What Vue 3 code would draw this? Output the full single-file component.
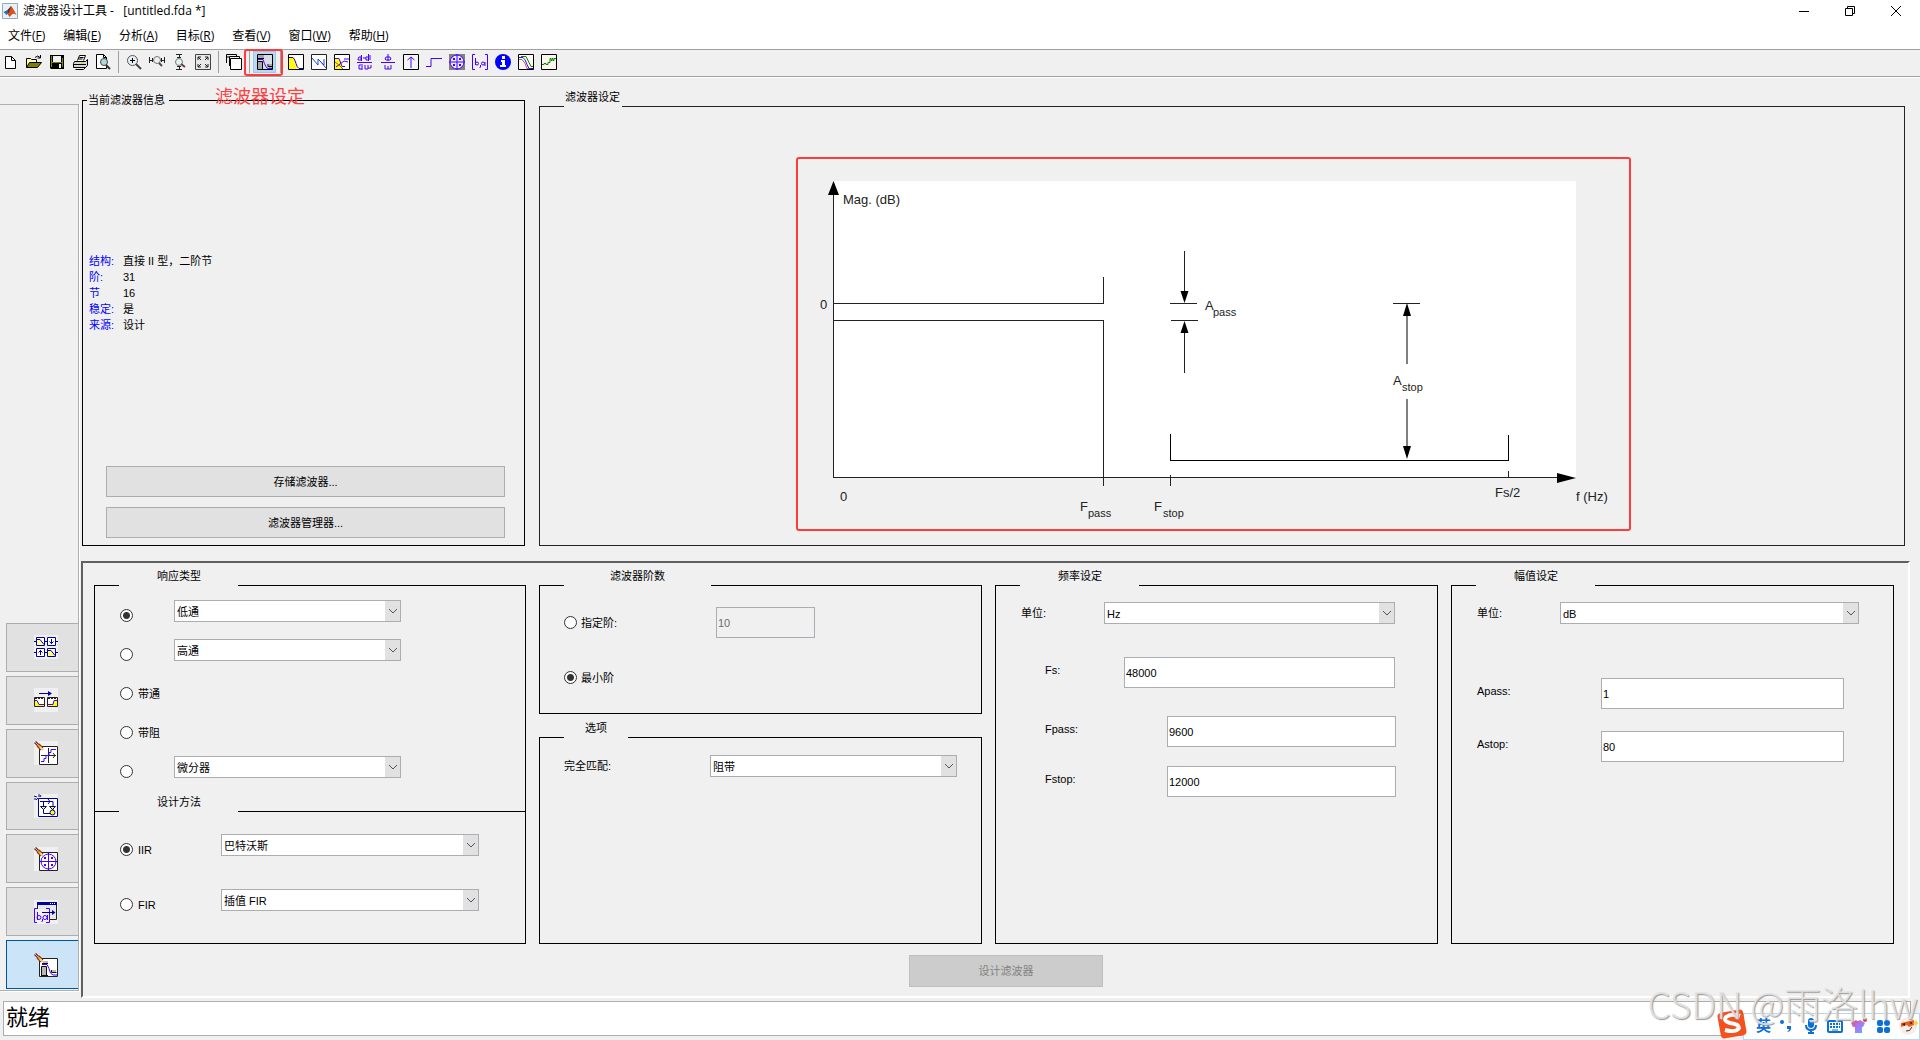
<script setup>
import { ref } from 'vue'

const menus = [
  ['文件', 'F'], ['编辑', 'E'], ['分析', 'A'], ['目标', 'R'],
  ['查看', 'V'], ['窗口', 'W'], ['帮助', 'H'],
]

const pencil =
  '<path d="M1 1l5 5" stroke="#703030" stroke-width="3"/><path d="M1 1l3 3" stroke="#d8a8a8" stroke-width="1"/><path d="M4 4l4 4" stroke="#703010" stroke-width="4"/><path d="M4 4l4 4" stroke="#f8a010" stroke-width="2"/><path d="M6 6l3 3" stroke="#f4c8a0" stroke-width="2"/>'

const icons = {
  new: '<path d="M2.500 2.500h6l4 4v8h-10z" fill="#fff" stroke="#000"/><path d="M8.500 2.500v4h4" fill="none" stroke="#000"/>',
  open: '<path d="M.5 13.500v-9h4l1 1h5v3" fill="#ffffb0" stroke="#000"/><path d="M.5 13.500l3-5h12l-4 5z" fill="#808000" stroke="#000"/><path d="M9 3.500q3-3 5 0M14.500 1v3h-3" fill="none" stroke="#000"/>',
  save: '<path d="M1 1h14v14H2l-1-1z" fill="#000"/><path d="M2 2h1v11H2zM13 4h1v9h-1z" fill="#808000"/><path d="M4 2h8v6H4z" fill="#f0f0f0"/><path d="M10 10h2v4h-2z" fill="#f0f0f0"/><path d="M3 8h10v1H3z" fill="#808000"/>',
  print: '<path d="M5.500 6.500l2-5h6l-2 5" fill="#fff" stroke="#000"/><path d="M7.500 3.500h4M6.500 5h4" stroke="#000"/><path d="M2.500 7.500h11l2-2v6l-2 2h-12v-4z" fill="#d8d8d8" stroke="#000"/><path d="M2 10.500h12M3.500 15.500h8l2-2" fill="none" stroke="#000"/><path d="M9 9h3" stroke="#e0d000"/>',
  preview: '<path d="M1.500.5h7l3 3v11h-10z" fill="#fff" stroke="#000"/><path d="M8.500.5v3h3" fill="none" stroke="#000"/><circle cx="9" cy="8" r="3.500" fill="#b0d8dc" stroke="#444"/><path d="M11 11l4 4" stroke="#303030" stroke-width="2"/>',
  zoomin: '<circle cx="6.500" cy="6.500" r="5" fill="#e8f0f4" stroke="#555"/><path d="M4 6.500h5M6.500 4v5" stroke="#000"/><path d="M10 10l5 5" stroke="#504040" stroke-width="2"/>',
  zoomx: '<circle cx="8" cy="6" r="3.500" fill="#e8f0f4" stroke="#777"/><path d="M10 9l3 3" stroke="#604040" stroke-width="2"/><path d="M.5 3v6M3.500 4v4M0 6.500h4M15.500 3v6M12.500 4v4M12 6.500h4" stroke="#222"/>',
  zoomy: '<circle cx="7" cy="8" r="3.500" fill="#e8f0f4" stroke="#777"/><path d="M9 10l4 3" stroke="#604040" stroke-width="2"/><path d="M4 .5h6M5 3.500h4M7.500 0v4M4 15.500h6M5 12.500h4M7.500 12v4" stroke="#222"/>',
  full: '<path d="M.5.500h15v15H.5z" fill="#e8e8e8" stroke="#444"/><path d="M3 6V3h3M3 3l3 3M10 3h3v3M13 3l-3 3M3 10v3h3M3 13l3-3M13 10v3h-3M13 13l-3-3" fill="none" stroke="#222"/>',
  windows: '<path d="M.5 9V.5h10V2M0 3h3M3.500 12V2.500h10V4" fill="none" stroke="#000"/><path d="M4.500 4.500h11v11h-11z" fill="#fff" stroke="#000"/>',
  design: '<path d="M.5.500h15v15H.5z" fill="#d8dce4" stroke="#000"/><path d="M1 1h6v3H1zM12 10h3v4h-3z" fill="#a8a8a8"/><path d="M1 8h4v7H1z" fill="#a8a8a8"/><path d="M1 4.500h6M1 7.500h4.500v8M11 10v2.500h5" fill="none" stroke="#000"/><path d="M1 5.500h5q3 9 5 9h4" fill="none" stroke="#40f"/>',
  mag: '<path d="M.5.500h15v15H.5z" fill="#fff" stroke="#000"/><path d="M1 4h4l4 11H1z" fill="#ff0"/><path d="M1 3.500h4q2 2 3 6t3 5h4" fill="none" stroke="#208"/>',
  phase: '<path d="M.5.500h15v15H.5z" fill="#fff" stroke="#222"/><path d="M1 4l6 7V5l6 6v-6M9 7l6 7" fill="none" stroke="#24d"/>',
  both: '<path d="M.5.500h15v15H.5z" fill="#fff" stroke="#000"/><path d="M1 4h4l4 11H1z" fill="#ff0"/><path d="M1 4.500h4l3 8h3M2 13l8-6 4 1M10 5h5" fill="none" stroke="#40f"/><path d="M1 8l4 3 4 4" fill="none" stroke="#a60"/>',
  group: '<path d="M0 8.500h15M4 3h-2l-1 2v1h3zM4.500 1v6M6 4h3M11 3h-2v3h3M11.500 0v7M13 1v5M5 10v6M4 11H2v4h3M8 11v4h3v-4M11 14h3v-3" fill="none" stroke="#40f"/>',
  pdelay: '<path d="M1 8.500h14M8 0v7M8 3h-2l-1 2 1 1h4l1-1-1-2zM5 11v4h3v-3M8 15h3v-4" fill="none" stroke="#40f"/>',
  impulse: '<path d="M.5.500h15v15H.5z" fill="#f4f4f4" stroke="#000"/><path d="M8 14V3M4.500 6L8 3l3.500 3" fill="none" stroke="#40f"/>',
  step: '<path d="M0 12.500h5v-8h11" fill="none" stroke="#40f"/>',
  pz: '<path d="M0 0h16v16H0z" fill="#808080"/><circle cx="8" cy="8" r="7" fill="#e8e8ff" stroke="#40f"/><path d="M8 0v16M0 8h16" stroke="#40f"/><path d="M4 4l2 2M6 4L4 6M10 4l2 2M12 4l-2 2M4 10l2 2M6 10l-2 2M10 10l2 2M12 10l-2 2" stroke="#40f"/>',
  coef: '<path d="M3 .5H.5v15H3M13 .5h2.500v15H13M3.500 4v7M8.500 11v2l-1 1" fill="none" stroke="#40f"/><circle cx="5" cy="9.500" r="1.500" fill="none" stroke="#40f"/><circle cx="11" cy="9.500" r="1.500" fill="none" stroke="#40f"/><path d="M13 8v4" stroke="#40f"/>',
  info: '<circle cx="8" cy="8" r="8" fill="#00f"/><path d="M7 2h3v3H7zM6 6h4v5h1v2H5v-2h2V8H6z" fill="#fff"/>',
  noise: '<path d="M.5.500h15v15H.5z" fill="#fffaf6" stroke="#000"/><path d="M1 3.500h4q2 1 4 7l2 4h4" fill="none" stroke="#40f"/><path d="M1 5.500h3l3 4 2 5h2" fill="none" stroke="#a66"/><path d="M3 2.500h5l3 6 2 4h2" fill="none" stroke="#080"/>',
  round: '<path d="M.5.500h15v15H.5z" fill="#fff6f0" stroke="#000"/><path d="M1 10.500h2v-1h2v1h2v-2h2v-4h1v2h1v-2h1v2h1v-2h2" fill="none" stroke="#080"/>',

  multirate: '<path d="M0 6.500h24M0 17.500h24" stroke="#0000a0"/><path d="M2.500 2.500h8v8h-8zM13.500 2.500h8v8h-8zM2.500 13.500h8v8h-8zM13.500 13.500h8v8h-8z" fill="#fff" stroke="#0000a0"/><path d="M3 5h3l4 5H3zM14 16h3l4 5h-7z" fill="#ff8"/><path d="M3 4.500h3l4 5M14 15.500h3l4 5" fill="none" stroke="#0000a0"/><path d="M17.500 4v5M15.500 6.500l2 2 2-2M6.500 20v-5M4.500 17.500l2-2 2 2" fill="none" stroke="#0000a0"/>',
  transform: '<path d="M5 5.500h12" stroke="#0000a0"/><path d="M14 3l4 2.500-4 2.500z" fill="#0000a0"/><path d="M.5 9.500h10v9H.5zM13.500 9.500h10v9h-10z" fill="#fff" stroke="#222"/><path d="M1 12h2l2 4h5v2H1zM23 12h-2l-2 4h-5v2h9z" fill="#ff0"/><path d="M1 12.500h2l2 4h5M23 12.500h-3l-1 4h-5" fill="none" stroke="#40f"/><path d="M1 10.500h9M14 10.500h9" stroke="#222" stroke-dasharray="2 1"/>',
  quantize: '<path d="M5.500 5.500h18v18h-18z" fill="#fff" stroke="#222"/><path d="M14.500 7v15M7 14.500h15M19 12l2 2.500-2 2.500" stroke="#222" fill="none"/><path d="M7 20.500h3v-3h2v-3h3v-3h2v-3h5" fill="none" stroke="#40f"/>' + pencil,
  realize: '<path d="M0 2l3 1M5 0v3M2 6l2-2M0 5h2M7 1l-1 2" stroke="#0000a0"/><path d="M4.500 4.500h19v18h-19z" fill="#fff" stroke="#0000a0"/><path d="M6 7.500h13v12M9.500 8v11.500h8M14 5l2 2.500-2 2.500" fill="none" stroke="#0000a0"/><path d="M6.500 12.500h6l-3 3zM15.500 12.500h6l-3 3z" fill="#ff0" stroke="#0000a0"/><circle cx="18.500" cy="18.500" r="2.500" fill="#ff0" stroke="#0000a0"/>',
  pzedit: '<path d="M5.500 5.500h18v18h-18z" fill="#fff" stroke="#222"/><circle cx="14.500" cy="14.500" r="7.500" fill="#fff" stroke="#40f"/><path d="M14.500 6v17M6 14.500h17M10 10l2 2M12 10l-2 2M17 10l2 2M19 10l-2 2M10 17l2 2M12 17l-2 2M17 17l2 2M19 17l-2 2" stroke="#40f"/>' + pencil,
  importf: '<path d="M3.500 2.500h19v17h-19z" fill="#e8e8e8" stroke="#222"/><path d="M3 2h20v3H3z" fill="#0000a0"/><path d="M16 3.500h6" stroke="#fff" stroke-dasharray="1 1"/><path d="M1 9h14v12H1z" fill="#f0f0f0"/><path d="M3 8.500H.5v14H3M12 8.500h3.500v14H12M3.500 12v8M8.500 19v2l-1 1" fill="none" stroke="#40f"/><circle cx="5" cy="17.500" r="2" fill="none" stroke="#40f"/><circle cx="11" cy="17.500" r="2" fill="none" stroke="#40f"/><path d="M13.500 15v5" stroke="#40f"/><path d="M8 12.500h11" stroke="#0000a0"/><path d="M18 10l3.500 2.500-3.500 2.500z" fill="#0000a0"/>',
  designf: '<path d="M5.500 5.500h18v18h-18z" fill="#fff" stroke="#222"/><path d="M8 14h5v8H8z" fill="#b8b8b8"/><path d="M9 8h5v2H9zM18 17h4v3h-4z" fill="#b8b8b8"/><path d="M8 10.500h6M7.500 22V13.500h5v9M17.500 17v2.500h5M7 22.500h7" fill="none" stroke="#111"/><path d="M8 11.500h5l2 4q1 6 4 6.500h4" fill="none" stroke="#40f"/>' + pencil,
}

const toolGroups = [
  [['new', '新建'], ['open', '打开'], ['save', '保存'], ['print', '打印'], ['preview', '打印预览']],
  [['zoomin', '放大'], ['zoomx', '横向放大'], ['zoomy', '纵向放大'], ['full', '完整视图']],
  [['windows', '完整视图分析']],
  [['design', '滤波器设定']],
  [['mag', '幅值响应'], ['phase', '相位响应'], ['both', '幅值和相位响应'], ['group', '群延迟'], ['pdelay', '相位延迟'],
    ['impulse', '脉冲响应'], ['step', '阶跃响应'], ['pz', '零极点图'], ['coef', '滤波器系数'], ['info', '滤波器信息'],
    ['noise', '幅值响应估计'], ['round', '舍入噪声功率谱']],
]

const sideTools = [
  ['multirate', '多速率滤波器'], ['transform', '变换滤波器'], ['quantize', '设置量化参数'], ['realize', '实现模型'],
  ['pzedit', '零极点编辑器'], ['importf', '导入滤波器'], ['designf', '设计滤波器'],
]

const info = [
  ['结构:', '直接 II 型，二阶节'], ['阶:', '31'], ['节', '16'], ['稳定:', '是'], ['来源:', '设计'],
]

const response = ref('low')
const responseRows = [
  { id: 'low', select: '低通' },
  { id: 'high', select: '高通' },
  { id: 'bandpass', label: '带通' },
  { id: 'bandstop', label: '带阻' },
  { id: 'other', select: '微分器' },
]
const method = ref('IIR')
const methodRows = [
  { id: 'IIR', select: '巴特沃斯' },
  { id: 'FIR', select: '插值 FIR' },
]
const order = ref('min')
</script>

<template>
  <div class="window">
    <header class="titlebar">
      <svg class="logo" width="16" height="16" viewBox="0 0 16 16">
        <path d="M.5.500h15v15H.5z" fill="#e8f0f8" stroke="#9ab" />
        <path d="M1.500 9l4-2 2 2-3 3z" fill="#2a6fb5" />
        <path d="M5.500 7l3.500-4 1 3-4 5z" fill="#5a3030" />
        <path d="M9 3q2 2 5.500 9-3-2-4-1t-3 3l-2-3q2-1 3.500-8z" fill="#d8501c" />
      </svg>
      <h1>滤波器设计工具 -&nbsp;&nbsp; [untitled.fda *]</h1>
      <div class="controls">
        <button type="button" aria-label="最小化"><svg width="10" height="10"><path d="M0 5.500h10" stroke="#000" /></svg></button>
        <button type="button" aria-label="还原"><svg width="10" height="10"><path d="M.5 2.500h7v7h-7zM2.500 2V.5h7v7H8" fill="none" stroke="#000" /></svg></button>
        <button type="button" aria-label="关闭"><svg width="10" height="10"><path d="M0 0l10 10M10 0L0 10" stroke="#000" /></svg></button>
      </div>
    </header>

    <nav class="menubar">
      <button v-for="[name, key] in menus" :key="key" type="button">{{ name }}(<u>{{ key }}</u>)</button>
    </nav>

    <div class="toolbar">
      <div v-for="(group, g) in toolGroups" :key="g" class="tool-group">
        <button
          v-for="[id, title] in group" :key="id" type="button" :aria-label="title"
          class="tool" :class="{ selected: id === 'design' }"
        >
          <svg width="16" height="16" viewBox="0 0 16 16" v-html="icons[id]"></svg>
          <span v-if="id === 'design'" class="callout"></span>
        </button>
      </div>
    </div>

    <div class="body">
      <aside class="sidebar">
        <div class="side-tools">
          <button
            v-for="[id, title] in sideTools" :key="id" type="button" :aria-label="title"
            :class="{ active: id === 'designf' }"
          >
            <svg width="24" height="24" viewBox="0 0 24 24" v-html="icons[id]"></svg>
          </button>
        </div>
      </aside>

      <main>
        <div class="top-row">
          <fieldset class="info">
            <legend>当前滤波器信息</legend>
            <dl>
              <template v-for="[k, v] in info" :key="k">
                <dt>{{ k }}</dt>
                <dd>{{ v }}</dd>
              </template>
            </dl>
            <div class="info-actions">
              <button type="button" class="push">存储滤波器...</button>
              <button type="button" class="push">滤波器管理器...</button>
            </div>
            <span class="note">滤波器设定</span>
          </fieldset>

          <fieldset class="spec">
            <legend class="tall fit">滤波器设定</legend>
            <div class="chart">
              <svg viewBox="798 159 831 370">
                <path d="M833 181h743v296H833z" fill="#fff" />
                <g fill="none" stroke="#222" shape-rendering="crispEdges">
                  <path d="M833.500 190V477.500H1560" />
                  <path d="M833 303.500h270.500V277" />
                  <path d="M833 320.500h270.500V486" />
                  <path d="M1170.500 475v11M1508.500 471v6" />
                  <path d="M1170.500 434v26.500h338V435" stroke="#000" />
                  <path d="M1170 303.500h27M1171 320.500h27M1393 303.500h27" />
                  <path d="M1184.500 251v42M1184.500 330v43" />
                </g>
                <path d="M1407 314v50M1407 399v50" stroke="#808080" stroke-width="2" />
                <path
                  d="M833.500 181l5.500 14h-11zM1576 478l-19-5v10zM1184.500 303l-4-12h8zM1184.500 321l-4 12h8zM1407 303l-4 13h8zM1407 459l-4-13h8z"
                />
                <g class="chart-text">
                  <text x="843" y="204">Mag. (dB)</text>
                  <text x="820" y="309">0</text>
                  <text x="840" y="501">0</text>
                  <text x="1080" y="511">F</text><text class="sub" x="1088" y="517">pass</text>
                  <text x="1154" y="511">F</text><text class="sub" x="1163" y="517">stop</text>
                  <text x="1205" y="310">A</text><text class="sub" x="1213" y="316">pass</text>
                  <text x="1393" y="385">A</text><text class="sub" x="1402" y="391">stop</text>
                  <text x="1495" y="497">Fs/2</text>
                  <text x="1576" y="501">f (Hz)</text>
                </g>
              </svg>
            </div>
          </fieldset>
        </div>

        <form class="panel" @submit.prevent>
          <div class="columns">
            <div class="column">
              <fieldset class="response">
                <legend class="tall wide">响应类型</legend>
                <div v-for="row in responseRows" :key="row.id" class="choice">
                  <input :id="'r-' + row.id" v-model="response" type="radio" name="response" :value="row.id" :aria-label="row.label || row.select" />
                  <label v-if="row.label" :for="'r-' + row.id">{{ row.label }}</label>
                  <span v-if="row.select" class="combo">
                    <select :aria-label="row.select"><option>{{ row.select }}</option></select>
                    <svg width="15" height="20"><path d="M4 8l4 4 4-4" fill="none" stroke="#555" /></svg>
                  </span>
                </div>
              </fieldset>
              <fieldset class="method">
                <legend class="tall wide">设计方法</legend>
                <div v-for="row in methodRows" :key="row.id" class="choice">
                  <input :id="'m-' + row.id" v-model="method" type="radio" name="method" :value="row.id" />
                  <label :for="'m-' + row.id">{{ row.id }}</label>
                  <span class="combo">
                    <select :aria-label="row.id"><option>{{ row.select }}</option></select>
                    <svg width="15" height="20"><path d="M4 8l4 4 4-4" fill="none" stroke="#555" /></svg>
                  </span>
                </div>
              </fieldset>
            </div>

            <div class="column">
              <fieldset class="order">
                <legend class="tall wider">滤波器阶数</legend>
                <div class="order-row">
                  <input id="o-spec" v-model="order" type="radio" name="order" value="spec" />
                  <label for="o-spec">指定阶:</label>
                  <input class="text" type="text" value="10" disabled aria-label="指定阶" />
                </div>
                <div class="order-row">
                  <input id="o-min" v-model="order" type="radio" name="order" value="min" />
                  <label for="o-min">最小阶</label>
                </div>
              </fieldset>
              <fieldset class="options">
                <legend class="tall narrow">选项</legend>
                <div class="match-row">
                  <label for="match">完全匹配:</label>
                  <span class="combo">
                    <select id="match"><option>阻带</option></select>
                    <svg width="15" height="20"><path d="M4 8l4 4 4-4" fill="none" stroke="#555" /></svg>
                  </span>
                </div>
              </fieldset>
            </div>

            <fieldset class="freq">
              <legend class="tall wide">频率设定</legend>
              <div class="field unit">
                <label for="f-unit">单位:</label>
                <span class="combo">
                  <select id="f-unit"><option>Hz</option></select>
                  <svg width="15" height="20"><path d="M4 8l4 4 4-4" fill="none" stroke="#555" /></svg>
                </span>
              </div>
              <div class="field fs"><label for="fs">Fs:</label><input id="fs" class="text" type="text" value="48000" /></div>
              <div class="field fpass"><label for="fpass">Fpass:</label><input id="fpass" class="text" type="text" value="9600" /></div>
              <div class="field fstop"><label for="fstop">Fstop:</label><input id="fstop" class="text" type="text" value="12000" /></div>
            </fieldset>

            <fieldset class="amp">
              <legend class="tall wide">幅值设定</legend>
              <div class="field unit">
                <label for="a-unit">单位:</label>
                <span class="combo">
                  <select id="a-unit"><option>dB</option></select>
                  <svg width="15" height="20"><path d="M4 8l4 4 4-4" fill="none" stroke="#555" /></svg>
                </span>
              </div>
              <div class="field apass"><label for="apass">Apass:</label><input id="apass" class="text" type="text" value="1" /></div>
              <div class="field astop"><label for="astop">Astop:</label><input id="astop" class="text" type="text" value="80" /></div>
            </fieldset>
          </div>
          <div class="submit-row">
            <button type="button" class="push" disabled>设计滤波器</button>
          </div>
        </form>
      </main>
    </div>

    <footer class="status">就绪</footer>

    <div class="ime">
      <svg class="sogou" width="32" height="32" viewBox="0 0 32 32">
        <rect x="3" y="3" width="26" height="26" rx="4" fill="#f4511e" transform="rotate(-10 16 16)" />
        <path d="M24 8q-9-3-14 1-3 4 4 6 9 1 9 5-3 5-14 2" fill="none" stroke="#fff" stroke-width="4" />
      </svg>
      <span class="lang">英</span>
      <svg width="16" height="16" viewBox="0 0 16 16" fill="#0a6fd8"><circle cx="3" cy="4" r="2" /><path d="M8 8h4v3q-1 3-4 3 2-1 2-3H8z" /></svg>
      <svg width="16" height="16" viewBox="0 0 16 16"><rect x="5" y="0" width="6" height="10" rx="3" fill="#0a6fd8" /><path d="M3 7q0 5 5 5t5-5M8 12v3M5 15h6" fill="none" stroke="#0a6fd8" stroke-width="2" /></svg>
      <svg width="16" height="16" viewBox="0 0 16 16"><rect x="1" y="3" width="14" height="11" rx="1" fill="none" stroke="#0a6fd8" stroke-width="2" /><path d="M3 6h10M3 9h10" stroke="#0a6fd8" stroke-width="2" stroke-dasharray="2 1" /><path d="M5 12h6" stroke="#0a6fd8" /></svg>
      <svg width="16" height="16" viewBox="0 0 16 16">
        <defs><linearGradient id="shirt" x1="0" y1="0" x2="1" y2="1"><stop offset="0" stop-color="#f0506e" /><stop offset=".5" stop-color="#a878f8" /><stop offset="1" stop-color="#50b8ff" /></linearGradient></defs>
        <path d="M0 5l5-3q2 2 4 0l5 3-2 4h-1v6H4V9H2z" fill="url(#shirt)" /><circle cx="14" cy="2" r="2" fill="#e04030" />
      </svg>
      <svg width="16" height="16" viewBox="0 0 16 16" fill="#0a6fd8"><rect x="2" y="2" width="6" height="6" rx="2" /><rect x="9" y="2" width="6" height="6" rx="3" /><rect x="2" y="9" width="6" height="6" rx="2" /><rect x="9" y="9" width="6" height="6" rx="2" /></svg>
      <svg width="20" height="20" viewBox="0 0 20 20"><circle cx="9" cy="10" r="9" fill="#f8ece8" /><path d="M2 7l13-3v5l-5 2-2-2-6 2z" fill="#e8601c" /><path d="M3 8l3-1v3zM10 7l3-1v2z" fill="#222" /><path d="M7 15q4 1 6-4" fill="none" stroke="#333" /><path d="M17 3l1 3 2 1-2 1-1 3-1-3-2-1 2-1z" fill="#f8d040" /></svg>
    </div>
    <div class="watermark">CSDN @雨洛lhw</div>
  </div>
</template>

<style>
body {
  margin: 0;
  background: #f0f0f0;
}
</style>

<style scoped>
.window {
  position: relative;
  display: flex;
  flex-direction: column;
  min-height: 100vh;
  overflow: hidden;
  background: #f0f0f0;
  color: #000;
  font: 11px/12px "Liberation Sans", "Noto Sans CJK SC", sans-serif;
}
.window * {
  box-sizing: border-box;
}
svg {
  display: block;
}
button,
input,
select {
  margin: 0;
  padding: 0;
  color: inherit;
  font: inherit;
}

.titlebar {
  display: flex;
  align-items: center;
  height: 24px;
  padding: 0 1px 2px 2px;
  background: #fff;
  font: 12px/16px "Open Sans", "Noto Sans CJK SC", sans-serif;
}
.titlebar h1 {
  flex: 1;
  margin: 0 0 0 5px;
  font: inherit;
}
.controls {
  display: flex;
}
.controls button {
  display: flex;
  align-items: center;
  justify-content: center;
  width: 46px;
  height: 20px;
  border: 0;
  background: none;
}
.menubar {
  display: flex;
  gap: 18px;
  height: 25px;
  padding: 0 0 2px 8px;
  background: #fff;
  font: 12px/22px "Open Sans", "Noto Sans CJK SC", sans-serif;
}
.menubar button {
  border: 0;
  background: none;
}

.toolbar {
  display: flex;
  align-items: center;
  height: 28px;
  margin-left: -1px;
  padding-bottom: 2px;
  border-top: 1px solid #a0a0a0;
  border-bottom: 1px solid #a0a0a0;
  box-shadow: 0 1px #fff;
}
.tool-group {
  display: flex;
  align-items: center;
  height: 22px;
}
.tool-group + .tool-group {
  padding-left: 8px;
  background: linear-gradient(#a0a0a0, #a0a0a0) 4px 0 / 1px 100% no-repeat;
}
.tool {
  position: relative;
  display: flex;
  align-items: center;
  justify-content: center;
  width: 23px;
  height: 22px;
  border: 0;
  background: none;
}
.tool.selected {
  border: 1px solid #99c9ef;
  background: #b9d9f3;
}
.callout {
  position: absolute;
  inset: -3px -8px -4px -10px;
  border: 2px solid #ff3b3b;
  border-radius: 3px;
}

.body {
  display: flex;
  flex: 1;
}
.sidebar {
  display: flex;
  flex: none;
  align-items: flex-end;
  width: 79px;
  margin: 27px 2px 7px 0;
  border: 1px solid #b0b0b0;
  border-left: 0;
  box-shadow: 1px 1px #fff;
}
.side-tools {
  display: flex;
  flex: 1;
  flex-direction: column;
  gap: 4px;
  height: 366px;
  margin: 0 0 1px 6px;
}
.side-tools button {
  display: flex;
  flex: 1;
  align-items: center;
  justify-content: center;
  padding-left: 7px;
  border: 1px solid #adadad;
  border-right: 0;
  background: #e1e1e1;
}
.side-tools svg {
  background: #f0f0f0;
}
.side-tools .active {
  border-color: #005499;
  background: #cce4f7;
}
.side-tools .active svg {
  background: none;
}

main {
  display: flex;
  flex: 1;
  flex-direction: column;
  gap: 15px;
  min-width: 0;
  padding: 14px 10px 0 0;
}
fieldset {
  min-width: 0;
  margin: 0;
  padding: 0;
  border: 1px solid #000;
}
legend {
  padding: 0;
}
.tall {
  height: 30px;
  margin-left: 24px;
}
.wide {
  width: 119px;
  padding-left: 38px;
}
.wider {
  width: 147px;
  padding-left: 46px;
}
.narrow {
  width: 64px;
  padding-left: 21px;
}
.fit {
  padding: 0 2px 0 1px;
}

.top-row {
  display: grid;
  flex: 1;
  grid-template-columns: 443fr 1366fr;
  gap: 14px;
  padding: 0 5px 0 1px;
}
.info {
  position: relative;
  display: flex;
  flex-direction: column;
  margin-top: 2px;
}
.info legend {
  margin-left: 4px;
  padding: 0 4px 0 1px;
  line-height: 14px;
}
.info dl {
  display: grid;
  grid-template-columns: 34px 1fr;
  margin: 146px 0 0 6px;
  line-height: 16px;
}
.info dt {
  color: #00f;
}
.info dd {
  margin: 0;
}
.info-actions {
  display: flex;
  flex-direction: column;
  gap: 10px;
  margin-top: auto;
  padding: 0 19px 7px 23px;
}
.push {
  height: 31px;
  border: 1px solid #adadad;
  background: #e1e1e1;
}
.note {
  position: absolute;
  top: -22px;
  left: 132px;
  color: #ff4040;
  font-size: 18px;
  line-height: 24px;
}
.spec {
  padding-right: 17px;
  border-color: #222;
}
.chart {
  max-width: 835px;
  margin: 36px auto 0;
  border: 2px solid #ff3b3b;
  border-radius: 3px;
}
.chart-text {
  font-size: 13px;
  fill: #222;
}
.sub {
  font-size: 11px;
}

.panel {
  padding: 7px 14px 9px 11px;
  border: 2px solid #606060;
  border-right-color: #fff;
  border-bottom-color: #fff;
}
.columns {
  display: grid;
  grid-template-columns: 432fr 443fr 443fr 443fr;
  gap: 13px;
}
.column {
  display: flex;
  flex-direction: column;
}
.response {
  padding-bottom: 33px;
  border-bottom: 0;
}
.method {
  margin-top: -15px;
  padding: 8px 0 32px;
}
.choice {
  display: flex;
  align-items: flex-end;
  height: 22px;
  padding-left: 25px;
}
.response .choice + .choice {
  margin-top: 17px;
}
.method .choice + .choice {
  margin-top: 33px;
}
.choice label {
  margin-left: 5px;
}
.response .combo {
  flex: none;
  width: 56%;
  margin-left: 41px;
}
.method .combo {
  flex: 1;
  margin-right: 46px;
}
.method label {
  width: 83px;
}
input[type="radio"] {
  flex: none;
  width: 13px;
  height: 13px;
  border: 1px solid #333;
  border-radius: 50%;
  background: #fff;
  appearance: none;
}
input[type="radio"]:checked {
  background: radial-gradient(circle, #333 3px, #fff 4px);
}
.combo {
  position: relative;
  display: block;
}
.combo svg {
  position: absolute;
  top: 1px;
  right: 1px;
  background: #e1e1e1;
  pointer-events: none;
}
select,
.text {
  display: block;
  width: 100%;
  border: 1px solid #abadb3;
  border-radius: 0;
  background: #fff;
  appearance: none;
}
select {
  height: 22px;
  padding: 1px 0 0 2px;
}
.text {
  height: 31px;
  padding-left: 1px;
}

.order {
  height: 144px;
  padding: 7px 0 0 24px;
}
.order .tall,
.options .tall {
  margin-left: 0;
}
.order-row {
  display: flex;
  align-items: center;
}
.order-row + .order-row {
  margin-top: 33px;
}
.order-row label {
  width: 139px;
  padding-left: 4px;
}
.order-row .text {
  width: 99px;
}
.text:disabled {
  background: #f0f0f0;
  color: #6d6d6d;
}
.options {
  flex: 1;
  margin-top: 8px;
  padding: 3px 24px 0;
}
.match-row {
  display: grid;
  grid-template-columns: 146px 1fr;
  align-items: center;
}

.freq,
.amp {
  padding-top: 2px;
}
.field {
  display: grid;
  align-items: center;
}
.freq .unit {
  grid-template-columns: 83px 1fr;
  padding: 0 42px 0 25px;
}
.field .text {
  grid-column: 2;
}
.field:not(.unit) label {
  padding-bottom: 6px;
}
.fs {
  grid-template-columns: 79px 1fr;
  margin-top: 33px;
  padding: 0 42px 0 49px;
}
.fpass,
.fstop {
  grid-template-columns: 122px 1fr;
  padding: 0 41px 0 49px;
}
.fpass {
  margin-top: 28px;
}
.fstop {
  margin-top: 19px;
}
.amp .unit {
  grid-template-columns: 83px 1fr;
  padding: 0 34px 0 25px;
}
.apass,
.astop {
  grid-template-columns: 124px 1fr;
  padding: 0 49px 0 25px;
}
.apass {
  margin-top: 54px;
}
.astop {
  margin-top: 22px;
}
.submit-row {
  display: flex;
  justify-content: center;
  margin-top: 11px;
  padding-left: 24px;
}
.submit-row .push {
  width: 194px;
  height: 32px;
  border-color: #bfbfbf;
  background: #ccc;
  color: #838383;
}

.status {
  height: 35px;
  margin: 3px 9px 4px 3px;
  padding-left: 2px;
  border: 1px solid #adadad;
  background: #fff;
  font-size: 22px;
  line-height: 32px;
}
.ime {
  position: absolute;
  right: 0;
  bottom: 0;
  display: flex;
  align-items: center;
  gap: 8px;
  height: 27px;
  padding: 0 0 1px 12px;
  border: 1px solid #b8d4f0;
  background: #fff;
}
.sogou {
  position: absolute;
  left: -28px;
  bottom: -1px;
}
.lang {
  color: #0a6fd8;
  font-size: 15px;
  font-weight: 700;
  line-height: 20px;
}
.watermark {
  position: absolute;
  right: 2px;
  bottom: 11px;
  color: rgba(228, 228, 228, 0.9);
  font: 300 37px/52px "Noto Sans CJK SC", sans-serif;
  text-shadow: 1px 1px 1px #999;
  white-space: nowrap;
  pointer-events: none;
}
</style>
